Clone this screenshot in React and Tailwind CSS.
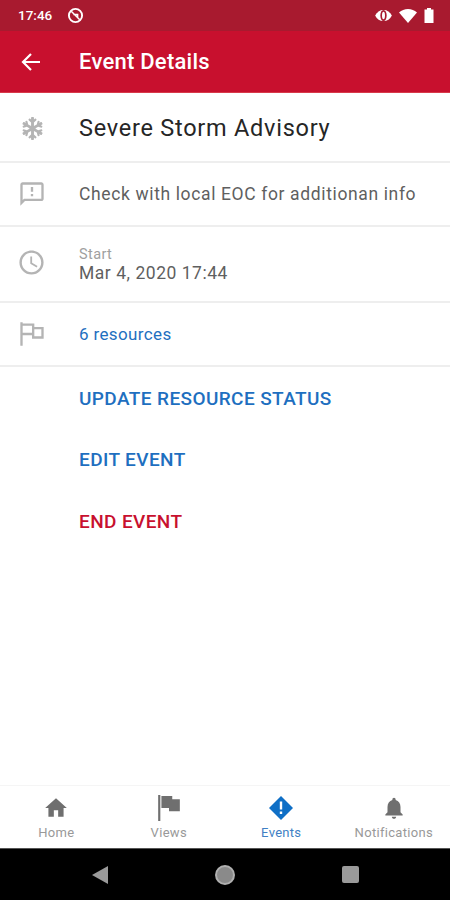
import React from "react";
import { FaSnowflake } from "react-icons/fa";

function FeedbackIcon() {
  return (
    <svg width="28" height="28" viewBox="0 0 24 24" fill="#b4b4b4">
      <path d="M20 2H4c-1.100 0-2 .9-2 2v18l4-4h14c1.100 0 2-.9 2-2V4c0-1.100-.9-2-2-2zm0 14H5.170L4 17.170V4h16v12zM11 12h2v2h-2zm0-6h2v4h-2z" />
    </svg>
  );
}

function ClockIcon() {
  return (
    <svg width="29" height="29" viewBox="0 0 24 24" fill="#b4b4b4">
      <path d="M11.990 2C6.470 2 2 6.480 2 12s4.470 10 9.990 10C17.520 22 22 17.520 22 12S17.520 2 11.990 2zM12 20c-4.420 0-8-3.580-8-8s3.580-8 8-8 8 3.580 8 8-3.580 8-8 8zm.5-13H11v6l5.250 3.150.75-1.230-4.500-2.670z" />
    </svg>
  );
}

function FlagOutline() {
  return (
    <svg width="28" height="28" viewBox="0 0 24 24" fill="#b4b4b4">
      <path d="M2 2h2v1h10v3h8v10h-10v-3H4v9H2V2zm2 3v6h8V5H4zm10 3v6h6V8h-6z" />
    </svg>
  );
}

function Row({ icon, className, children }) {
  return (
    <div className={`flex items-center border-b-2 border-[#eeeeee] ${className}`}>
      <div className="w-[79px] pl-[18px] shrink-0 flex items-center">{icon}</div>
      <div className="flex-1 min-w-0">{children}</div>
    </div>
  );
}

function NavItem({ icon, label, active }) {
  return (
    <div className="flex-1 flex flex-col items-center pt-[9px]">
      <div className="h-[26px] flex items-center justify-center">{icon}</div>
      <span className={`text-[13px] leading-4 mt-[4px] tracking-[0.3px] ${active ? "text-[#3f7fc4]" : "text-[#999999]"}`}>
        {label}
      </span>
    </div>
  );
}

export default function App() {
  return (
    <div className="w-[450px] h-[900px] flex flex-col bg-white overflow-hidden font-[Roboto,sans-serif]">
      {/* status bar */}
      <div className="h-[31px] bg-[#a81a2f] flex items-center justify-between pl-[18px] pr-[16px] text-white shrink-0">
        <div className="flex items-center gap-[15px]">
          <span className="text-[13.5px] font-medium">17:46</span>
          <svg width="17" height="17" viewBox="0 0 16 16" fill="none" stroke="white" strokeWidth="1.800">
            <circle cx="8" cy="8" r="6.200" />
            <path d="M4 4l8 8M6 7h4v3" strokeWidth="1.400" />
          </svg>
        </div>
        <div className="flex items-center gap-[7px]">
          <svg width="17" height="13" viewBox="0 0 18 14">
            <path d="M0 7c2-4 5-6 9-6s7 2 9 6c-2 4-5 6-9 6S2 11 0 7z" fill="white" />
            <ellipse cx="9" cy="7" rx="3.400" ry="6" fill="#a81a2f" />
            <ellipse cx="9" cy="7" rx="1.600" ry="4" fill="white" />
          </svg>
          <svg width="18" height="14" viewBox="0 0 18 14" fill="white">
            <path d="M0 3.500C2.500 1.300 5.600 0 9 0s6.500 1.300 9 3.500L9 14z" />
          </svg>
          <svg width="10" height="15" viewBox="0 0 10 15" fill="white">
            <path d="M3 0h4v1.500h2.500V15H.5V1.500H3z" />
          </svg>
        </div>
      </div>

      {/* app bar */}
      <div className="h-[62px] bg-[#c8102e] flex items-center text-white shrink-0 border-b border-[#d83a4a]">
        <div className="w-[79px] pl-[21px] shrink-0">
          <svg width="20" height="20" viewBox="0 0 20 20" fill="none" stroke="white" strokeWidth="2.200">
            <path d="M19 10H2M10 2l-8 8 8 8" />
          </svg>
        </div>
        <h1 className="text-[22px] font-medium tracking-[0.25px]">Event Details</h1>
      </div>

      {/* details */}
      <Row icon={<div className="pl-[3px] pt-[3px]"><FaSnowflake size={23} color="#b4b4b4" /></div>} className="h-[70px]">
        <span className="block pt-[3px] text-[23.5px] text-[#262626] tracking-[0.75px]">Severe Storm Advisory</span>
      </Row>
      <Row icon={<FeedbackIcon />} className="h-[64px]">
        <span className="text-[17.5px] text-[#5f5f5f] tracking-[0.63px] whitespace-nowrap">Check with local EOC for additionan info</span>
      </Row>
      <Row icon={<div className="-mt-[4px] -ml-[1px]"><ClockIcon /></div>} className="h-[76px]">
        <div className="flex flex-col">
          <span className="text-[14.5px] leading-[18px] text-[#a0a0a0] tracking-[0.4px]">Start</span>
          <span className="text-[17.5px] leading-[19px] text-[#5f5f5f] tracking-[0.53px]">Mar 4, 2020 17:44</span>
        </div>
      </Row>
      <Row icon={<FlagOutline />} className="h-[64px]">
        <span className="block pt-[1px] text-[17px] text-[#1e6fc0] tracking-[0.37px]">6 resources</span>
      </Row>

      {/* actions */}
      <div className="flex flex-col pt-[1px] pl-[79px] text-[19px] font-medium tracking-[0.4px]">
        <button className="h-[62px] text-left text-[#1e6fc0]">UPDATE RESOURCE STATUS</button>
        <button className="h-[61px] text-left text-[#1e6fc0]">EDIT EVENT</button>
        <button className="h-[62px] text-left text-[#c8102e]">END EVENT</button>
      </div>

      <div className="flex-1" />

      {/* bottom nav */}
      <div className="h-[63px] flex border-t border-[#f5f5f5] shrink-0">
        <NavItem
          label="Home"
          icon={
            <svg width="26" height="26" viewBox="0 0 24 24" fill="#6f6f6f">
              <path d="M10 20v-6h4v6h5v-8h3L12 3 2 12h3v8z" />
            </svg>
          }
        />
        <NavItem
          label="Views"
          icon={
            <svg width="26" height="26" viewBox="0 0 24 24" fill="#6f6f6f">
              <path d="M2 0h2v24H2zM5 1h10v3h7v11H12v-3H5z" />
            </svg>
          }
        />
        <NavItem
          active
          label="Events"
          icon={
            <svg width="24" height="24" viewBox="0 0 24 24">
              <path d="M12 0l12 12-12 12L0 12z" fill="#0f6fc6" />
              <path d="M10.800 5.500h2.400v8h-2.400zM10.800 15.500h2.400v2.500h-2.400z" fill="white" />
            </svg>
          }
        />
        <NavItem
          label="Notifications"
          icon={
            <svg width="26" height="26" viewBox="0 0 24 24" fill="#6f6f6f">
              <path d="M12 22c1.100 0 2-.9 2-2h-4c0 1.100.9 2 2 2zm6-6v-5c0-3.070-1.630-5.640-4.500-6.320V4c0-.83-.67-1.500-1.500-1.500s-1.500.67-1.500 1.500v.68C7.640 5.360 6 7.920 6 11v5l-2 2v1h16v-1l-2-2z" />
            </svg>
          }
        />
      </div>

      {/* android nav */}
      <div className="h-[52px] bg-black flex items-center justify-center gap-[107px] shrink-0 border-t border-[#555555]">
        <svg width="16" height="18" viewBox="0 0 16 18"><path d="M16 0v18L0 9z" fill="#9a9a9a" /></svg>
        <div className="w-[20px] h-[20px] rounded-full bg-[#8a8a8a] border-2 border-[#b0b0b0]" />
        <div className="w-[17px] h-[17px] rounded-[2px] bg-[#9a9a9a]" />
      </div>
    </div>
  );
}
